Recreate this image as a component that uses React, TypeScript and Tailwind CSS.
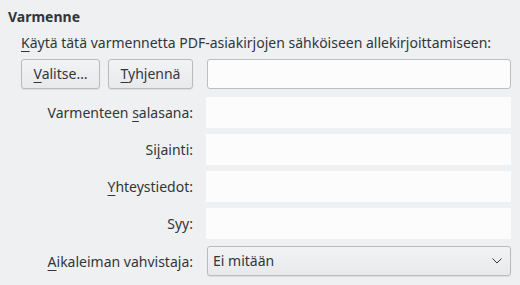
import React from "react";

const U = ({ children }: { children: React.ReactNode }) => (
  <span className="underline decoration-1 underline-offset-[3px]">{children}</span>
);

const btn =
  "h-[30px] rounded-[3px] border border-[#b9bbbd] bg-gradient-to-b from-[#f2f3f4] to-[#e8e9ea] shadow-[0_1px_1px_rgba(0,0,0,0.08)]";

export default function App() {
  return (
    <div className="w-[520px] h-[285px] bg-[#eff0f1] text-[#31363b] text-[14px] leading-none font-['Noto_Sans',sans-serif] overflow-hidden">
      <div className="pt-[10px] pl-[8px] font-bold h-[16px] box-content">Varmenne</div>
      <div className="pl-[21px] mt-[10px] h-[16px]">
        <U>K</U>äytä tätä varmennetta PDF-asiakirjojen sähköiseen allekirjoittamiseen:
      </div>
      <div className="flex items-center mt-[7px] h-[30px]">
        <div className="pl-[21px] flex gap-[8px]">
          <button className={`w-[79px] ${btn}`}>
            <U>V</U>alitse…
          </button>
          <button className={`w-[85px] ${btn}`}>
            <U>T</U>yhjennä
          </button>
        </div>
        <div className="ml-[14px] w-[304px] h-[30px] rounded-[3px] border border-[#bcbebf] bg-[#fcfcfc]" />
      </div>
      <div className="grid grid-cols-[193px_305px] gap-x-[13px] gap-y-[6px] mt-[8px]">
        <div className="flex items-center justify-end h-[31px]"><span>Varmenteen <U>s</U>alasana:</span></div>
        <div className="bg-[#fcfcfc] h-[31px]" />
        <div className="flex items-center justify-end h-[31px]"><span>Si<U>j</U>ainti:</span></div>
        <div className="bg-[#fcfcfc] h-[31px]" />
        <div className="flex items-center justify-end h-[31px]"><span><U>Y</U>hteystiedot:</span></div>
        <div className="bg-[#fcfcfc] h-[31px]" />
        <div className="flex items-center justify-end h-[31px]"><span>Syy:</span></div>
        <div className="bg-[#fcfcfc] h-[31px]" />
        <div className="flex items-center justify-end h-[31px] mt-[1px]"><span><U>A</U>ikaleiman vahvistaja:</span></div>
        <div className={`mt-[1px] ml-[1px] w-[304px] ${btn} flex items-center justify-between pl-[5px] pr-[8px]`}>
          <span>Ei mitään</span>
          <svg width="10" height="6" viewBox="0 0 10 6" fill="none">
            <path d="M0.5 0.5 L5 5 L9.5 0.5" stroke="#31363b" strokeWidth="1" />
          </svg>
        </div>
      </div>
    </div>
  );
}
